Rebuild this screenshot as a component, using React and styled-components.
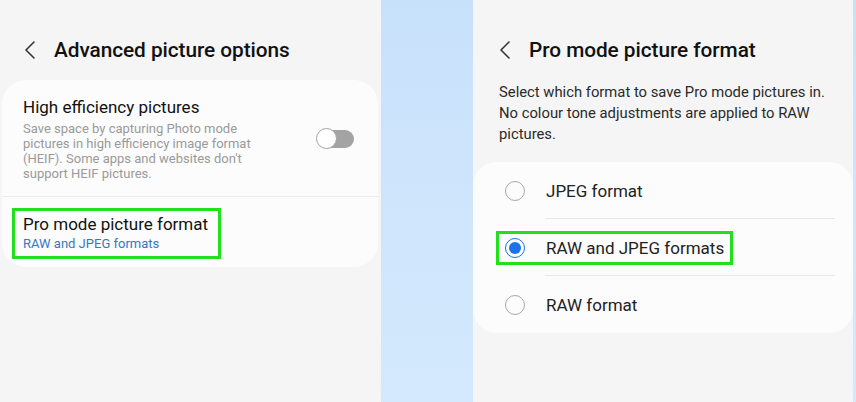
import React from "react";
import styled, { createGlobalStyle } from "styled-components";

const GlobalStyle = createGlobalStyle`
  html, body {
    margin: 0;
    padding: 0;
    background: #f5f5f5;
  }
  body {
    font-family: Roboto, "Noto Sans", "Liberation Sans", sans-serif;
    color: #111;
  }
`;

const Page = styled.div`
  display: flex;
  width: 856px;
  height: 402px;
  overflow: hidden;
`;

const Panel = styled.div`
  width: ${(p) => p.width}px;
  flex-shrink: 0;
  background: #f5f5f5;
  display: flex;
  flex-direction: column;
`;

const Strip = styled.div`
  width: ${(p) => p.width}px;
  flex-shrink: 0;
  background: linear-gradient(180deg, #c8e1fb 0%, #d4e9fd 100%);
`;

const Header = styled.div`
  display: flex;
  align-items: center;
  height: 28px;
  margin-top: 36px;
  padding-left: ${(p) => p.indent}px;
  gap: 18px;
`;

const Title = styled.h1`
  margin: 0;
  font-size: 20.8px;
  font-weight: 500;
  color: #111;
  letter-spacing: -0.05px;
`;

const Back = () => (
  <svg width="12" height="20" viewBox="0 0 12 20" fill="none">
    <path d="M10 2 L2 10 L10 18" stroke="#333" strokeWidth="1.6" strokeLinecap="round" strokeLinejoin="round" />
  </svg>
);

const Card = styled.div`
  background: #fcfcfc;
  border-radius: 24px;
  margin: ${(p) => p.margin};
  padding: ${(p) => p.pad};
`;

const SettingRow = styled.div`
  display: flex;
  align-items: center;
  justify-content: space-between;
  padding: ${(p) => p.pad};
  border-bottom: ${(p) => (p.divider ? "1px solid #ececec" : "none")};
`;

const SettingText = styled.div`
  display: flex;
  flex-direction: column;
`;

const SettingTitle = styled.div`
  font-size: 17px;
  line-height: 22px;
  color: #111;
`;

const SettingDesc = styled.div`
  font-size: 13px;
  line-height: 15px;
  color: #9a9a9a;
  width: 262px;
  margin-top: 3px;
`;

const SettingValue = styled.div`
  font-size: 13px;
  line-height: 15px;
  color: #3577c4;
  margin-top: 1px;
`;

const Highlight = styled.div`
  border: 3px solid #22e01c;
  padding: ${(p) => p.pad};
  margin: ${(p) => p.margin};
  width: fit-content;
  display: flex;
  align-items: center;
`;

const Toggle = styled.div`
  position: relative;
  width: 38px;
  height: 22px;
  margin-right: 2px;
  flex-shrink: 0;

  &::before {
    content: "";
    position: absolute;
    left: 4px;
    right: 0;
    top: 2px;
    height: 18px;
    border-radius: 9px;
    background: #a3a3a3;
  }
  &::after {
    content: "";
    position: absolute;
    left: 0;
    top: 0;
    width: 19px;
    height: 19px;
    border-radius: 50%;
    background: #fff;
    border: 1.5px solid #a3a3a3;
  }
`;

const Description = styled.p`
  margin: 18px 20px 0 26px;
  font-size: 14.8px;
  line-height: 21px;
  color: #2a2a2a;
`;

const OptionRow = styled.div`
  display: flex;
  align-items: center;
  height: 57px;
  padding-left: ${(p) => (p.boxed ? 23 : 32)}px;
  gap: 21px;
  position: relative;

  &::after {
    content: "";
    display: ${(p) => (p.last ? "none" : "block")};
    position: absolute;
    left: 72px;
    right: 18px;
    bottom: 0;
    border-bottom: 1px solid #e8e8e8;
  }
`;

const Radio = styled.span`
  width: 20px;
  height: 20px;
  border-radius: 50%;
  border: 1.4px solid ${(p) => (p.checked ? "#1a73e8" : "#a8a8a8")};
  box-sizing: border-box;
  display: flex;
  align-items: center;
  justify-content: center;
  flex-shrink: 0;

  &::after {
    content: "";
    width: 12px;
    height: 12px;
    border-radius: 50%;
    background: #1a73e8;
    display: ${(p) => (p.checked ? "block" : "none")};
  }
`;

const OptionLabel = styled.span`
  font-size: 17px;
  color: #222;
  margin-left: ${(p) => p.offset || 0}px;
`;

const options = ["JPEG format", "RAW and JPEG formats", "RAW format"];

export default function App() {
  return (
    <>
      <GlobalStyle />
      <Page>
        <Panel width={381}>
          <Header indent={24}>
            <Back />
            <Title>Advanced picture options</Title>
          </Header>
          <Card margin="16px 3px 0 2px" pad="16px 0 8px">
            <SettingRow pad="0 22px 15px 21px" divider>
              <SettingText>
                <SettingTitle>High efficiency pictures</SettingTitle>
                <SettingDesc>
                  Save space by capturing Photo mode pictures in high efficiency
                  image format (HEIF). Some apps and websites don't support HEIF
                  pictures.
                </SettingDesc>
              </SettingText>
              <Toggle />
            </SettingRow>
            <Highlight pad="2px 10px 5px 8px" margin="11px 0 0 10px">
              <SettingText>
                <SettingTitle>Pro mode picture format</SettingTitle>
                <SettingValue>RAW and JPEG formats</SettingValue>
              </SettingText>
            </Highlight>
          </Card>
        </Panel>
        <Strip width={92} />
        <Panel width={380}>
          <Header indent={26}>
            <Back />
            <Title>Pro mode picture format</Title>
          </Header>
          <Description>
            Select which format to save Pro mode pictures in. No colour tone
            adjustments are applied to RAW pictures.
          </Description>
          <Card margin="17px 0 0 0" pad="0">
            {options.map((o, i) =>
              i === 1 ? (
                <OptionRow key={o} boxed>
                  <Highlight pad="4px 6px 4px 6px" margin="0">
                    <Radio checked />
                    <OptionLabel offset={21}>{o}</OptionLabel>
                  </Highlight>
                </OptionRow>
              ) : (
                <OptionRow key={o} last={i === options.length - 1}>
                  <Radio />
                  <OptionLabel>{o}</OptionLabel>
                </OptionRow>
              )
            )}
          </Card>
        </Panel>
        <Strip width={3} />
      </Page>
    </>
  );
}
